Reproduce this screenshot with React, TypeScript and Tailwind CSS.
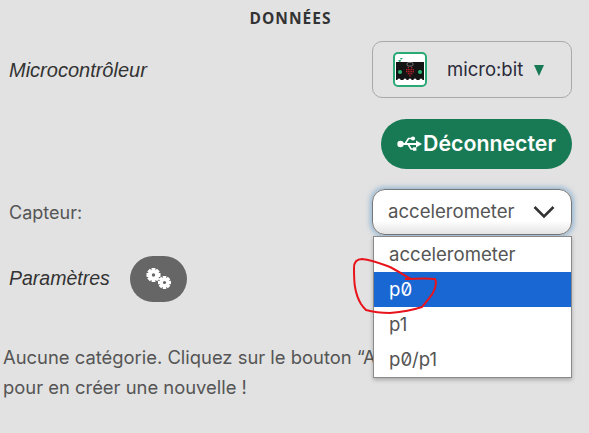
function MicrobitLogo() {
  const leds = [
    [1, 0], [3, 0], [0, 1], [1, 1], [2, 1], [3, 1], [4, 1], [0, 2], [1, 2], [2, 2], [3, 2], [4, 2], [1, 3], [2, 3], [3, 3], [2, 4],
  ];
  return (
    <svg width="34" height="35" viewBox="0 0 34 35" className="shrink-0">
      <rect x="1" y="1" width="32" height="33" rx="4" fill="#fff" stroke="#2aa876" strokeWidth="2" />
      <path d="M5 8h3l-1 3zM7 6h3l-2 2z" fill="#2aa876" />
      <rect x="3" y="10" width="28" height="18" fill="#141414" />
      <rect x="14" y="10.5" width="6" height="3.5" rx="1.5" fill="none" stroke="#8a8a8a" strokeWidth="0.8" />
      {leds.map(([x, y]) => (
        <rect key={`${x}-${y}`} x={13 + x * 1.7} y={15 + y * 2} width="1.2" height="1.4" fill="#b3202a" />
      ))}
      <circle cx="7" cy="20" r="2" fill="#2bb673" />
      <circle cx="27" cy="20" r="2" fill="#2bb673" />
      {[6, 12, 17, 22, 28].map((x) => (
        <circle key={x} cx={x} cy="28" r="1.6" fill="#fff" />
      ))}
    </svg>
  );
}

function UsbIcon() {
  return (
    <svg width="26" height="18" viewBox="0 0 26 18" className="shrink-0" fill="#fff">
      <circle cx="3.5" cy="9" r="3.2" />
      <path d="M3 8h17v2H3z" />
      <path d="M19 5.5 25 9l-6 3.5z" />
      <path d="M8 9 11.5 3.5H15" fill="none" stroke="#fff" strokeWidth="1.6" />
      <circle cx="16" cy="3.5" r="2.1" />
      <path d="M11 9l3 5h3" fill="none" stroke="#fff" strokeWidth="1.6" />
      <rect x="16" y="12.3" width="3.4" height="3.4" />
    </svg>
  );
}

function Gear({ cx, cy, r }: { cx: number; cy: number; r: number }) {
  const teeth = [0, 45, 90, 135];
  return (
    <g>
      {teeth.map((a) => (
        <rect
          key={a}
          x={cx - r * 0.28}
          y={cy - r}
          width={r * 0.56}
          height={r * 2}
          rx={0.4}
          fill="#fff"
          transform={`rotate(${a} ${cx} ${cy})`}
        />
      ))}
      <circle cx={cx} cy={cy} r={r * 0.74} fill="#fff" />
      <circle cx={cx} cy={cy} r={r * 0.24} fill="#666" />
    </g>
  );
}

export default function App() {
  return (
    <div className="relative h-[433px] w-[589px] overflow-hidden bg-[#e2e2e2] font-['Inter',sans-serif] text-[#4a4a4a]">
      <h2 className="pt-[10px] pr-[8px] text-center text-[15.5px] leading-[17px] font-bold tracking-[1px] text-[#333] font-['Open_Sans',sans-serif]">
        DONNÉES
      </h2>

      <div className="mt-[14px] flex items-center justify-between pl-[9px] pr-[17px]">
        <span className="font-['Liberation_Sans',sans-serif] text-[20px] italic text-[#333]">Microcontrôleur</span>
        <button className="flex h-[57px] w-[200px] items-center rounded-[10px] border border-[#a9a9a9] pl-[20px]">
          <MicrobitLogo />
          <span className="ml-[20px] text-[18.5px] text-[#2a2a3a]">micro:bit</span>
          <span className="ml-[11px] mt-[2px] h-0 w-0 border-x-[5.5px] border-t-[11px] border-x-transparent border-t-[#187a54]" />
        </button>
      </div>

      <div className="mt-[21px] flex justify-end pr-[17px]">
        <button className="flex h-[50px] w-[191px] items-center justify-center rounded-full bg-[#187a54] text-[21.3px] font-semibold text-white">
          <UsbIcon />
          Déconnecter
        </button>
      </div>

      <div className="mt-[20px] flex items-center justify-between pl-[9px] pr-[17px]">
        <span className="text-[18px] text-[#555]">Capteur:</span>
        <div className="flex h-[46px] w-[200px] items-center justify-between rounded-[13px] border border-[#777] bg-gradient-to-b from-white from-70% to-[#e4e4e4] pl-[15px] pr-[16px] shadow-[0_0_5px_2px_rgba(90,150,200,0.55)]">
          <span className="text-[18.6px] text-[#555]">accelerometer</span>
          <svg width="22" height="14" viewBox="0 0 22 14" fill="none" stroke="#333" strokeWidth="2.6">
            <path d="M1.5 2 11 11.5 20.5 2" />
          </svg>
        </div>
      </div>

      <div className="mt-[21px] flex items-center pl-[9px]">
        <span className="w-[121px] font-['Liberation_Sans',sans-serif] text-[19.5px] italic text-[#333]">Paramètres</span>
        <button className="flex h-[46px] w-[57px] items-center justify-center rounded-full bg-[#666]">
          <svg width="26" height="22" viewBox="0 0 26 22">
            <Gear cx={7.5} cy={7} r={7} />
            <Gear cx={18.5} cy={14.5} r={6.5} />
          </svg>
        </button>
      </div>

      <p className="mt-[40px] whitespace-nowrap pl-[3px] text-[18.4px] leading-[30px] text-[#555]">
        Aucune catégorie. Cliquez sur le bouton “A
        <br />
        pour en créer une nouvelle !
      </p>

      <ul className="absolute left-[373px] top-[236px] w-[199px] border border-[#8a8a8a] bg-white text-[18.6px] leading-[35px] text-[#555] shadow-[0_2px_4px_rgba(0,0,0,0.25)] [font-feature-settings:'zero']">
        <li className="pl-[15px]">accelerometer</li>
        <li className="bg-[#1967d2] pl-[15px] text-white">p0</li>
        <li className="pl-[15px]">p1</li>
        <li className="pl-[15px]">p0/p1</li>
      </ul>

      <svg className="pointer-events-none absolute left-0 top-0" width="589" height="433" fill="none">
        <path
          d="M411 279C404 275 396 270 390 267C382 264 372 260 362 259C356 259 354 263 354 268C354 275 354 281 355 287C356 293 358 299 361 304C363 307 364 308 366 310C373 312 382 313 390 313C402 312 413 310 422 307C425 303 428 300 430 297C433 294 434 291 435 288C436 285 436 281 435 279C425 278 415 279 405 279"
          stroke="#e8141c"
          strokeWidth="2"
        />
      </svg>
    </div>
  );
}
